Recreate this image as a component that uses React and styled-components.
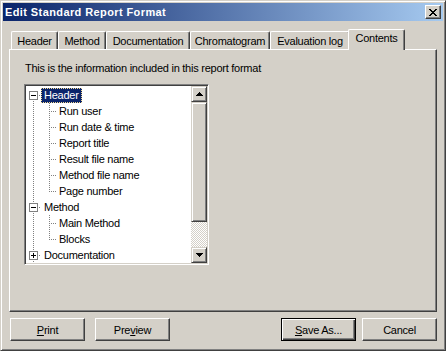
import React from "react";
import styled, { createGlobalStyle, css } from "styled-components";

const FACE = "#D4D0C8";
const SHADOW = "#808080";
const DARK = "#404040";

const Global = createGlobalStyle`
  html, body { margin: 0; padding: 0; background: ${FACE}; }
  body {
    font-family: "Liberation Sans", Arial, sans-serif;
    font-size: 11px;
    letter-spacing: -0.25px;
    color: #000;
  }
  * { box-sizing: border-box; }
`;

const Window = styled.div`
  width: 446px;
  height: 351px;
  background: ${FACE};
  border: 1px solid;
  border-color: ${FACE} ${DARK} ${DARK} ${FACE};
  box-shadow: inset 1px 1px #fff, inset -1px -1px ${SHADOW};
  padding: 2px;
  display: flex;
  flex-direction: column;
`;

const TitleBar = styled.div`
  height: 18px;
  flex: 0 0 18px;
  display: flex;
  align-items: center;
  justify-content: space-between;
  padding: 0 2px 0 2px;
  background: linear-gradient(to right, #0a246a, #a6caf0);
  color: #fff;
  font-weight: bold;
  letter-spacing: 0.4px;
`;

const Title = styled.span`
  white-space: nowrap;
`;

const Bevel = css`
  background: ${FACE};
  border: 1px solid;
  border-color: #fff ${DARK} ${DARK} #fff;
  box-shadow: inset -1px -1px ${SHADOW};
`;

const CloseButton = styled.div`
  ${Bevel}
  width: 16px;
  height: 14px;
  display: flex;
  align-items: center;
  justify-content: center;
  padding-right: 1px;
`;

const Body = styled.div`
  flex: 1;
  display: flex;
  flex-direction: column;
  padding: 8px 6px 0 6px;
`;

const TabStrip = styled.div`
  height: 20px;
  display: flex;
  align-items: flex-end;
  padding-left: 2px;
  position: relative;
  z-index: 1;
`;

const Tab = styled.div`
  width: ${(p) => p.$w}px;
  height: 18px;
  display: flex;
  align-items: center;
  justify-content: center;
  padding-top: 1px;
  background: ${FACE};
  border-left: 1px solid #fff;
  border-top: 1px solid #fff;
  border-right: 1px solid ${DARK};
  border-top-left-radius: 2px;
  border-top-right-radius: 2px;
  box-shadow: inset -1px 0 ${SHADOW};
  white-space: nowrap;
  ${(p) =>
    p.$active &&
    css`
      width: ${p.$w + 4}px;
      height: 21px;
      margin: 0 -2px -1px -2px;
      padding-top: 0;
      padding-bottom: 4px;
      position: relative;
      z-index: 2;
    `}
`;

const Panel = styled.div`
  height: 263px;
  flex: 0 0 263px;
  background: ${FACE};
  border: 1px solid;
  border-color: #fff ${DARK} ${DARK} #fff;
  box-shadow: inset -1px -1px ${SHADOW};
  padding: 10px 0 0 14px;
  display: flex;
  flex-direction: column;
  align-items: flex-start;
`;

const Description = styled.div`
  height: 16px;
  line-height: 16px;
  margin-left: 1px;
  white-space: nowrap;
`;

const TreeBox = styled.div`
  margin-top: 8px;
  width: 185px;
  height: 181px;
  border: 1px solid;
  border-color: ${SHADOW} #fff #fff ${SHADOW};
  box-shadow: inset 1px 1px ${DARK}, inset -1px -1px ${FACE};
  padding: 1px;
  display: flex;
`;

const TreeList = styled.div`
  flex: 1;
  background: #fff;
  overflow: hidden;
  padding-top: 1px;
  display: flex;
  flex-direction: column;
`;

const Row = styled.div`
  height: 16px;
  flex: 0 0 16px;
  display: flex;
  align-items: flex-start;
`;

const Label = styled.span`
  margin-top: 1px;
  height: 15px;
  line-height: 13px;
  padding: 0 2px;
  border: 1px dotted transparent;
  white-space: nowrap;
  ${(p) =>
    p.$selected &&
    css`
      background: #0a246a;
      color: #fff;
      border-color: #f5db95;
    `}
`;

const ScrollBar = styled.div`
  width: 16px;
  flex: 0 0 16px;
  display: flex;
  flex-direction: column;
`;

const ScrollButton = styled.div`
  ${Bevel}
  border-color: ${FACE} ${DARK} ${DARK} ${FACE};
  box-shadow: inset 1px 1px #fff, inset -1px -1px ${SHADOW};
  width: 16px;
  height: ${(p) => p.$h}px;
  flex: 0 0 ${(p) => p.$h}px;
  display: flex;
  align-items: center;
  justify-content: center;
`;

const Track = styled.div`
  flex: 1;
  background: repeating-conic-gradient(${FACE} 0 25%, #fff 0 50%) 0 0 / 2px 2px;
`;

const ButtonRow = styled.div`
  margin-top: 6px;
  display: flex;
  padding-left: 1px;
`;

const Group = styled.div`
  display: flex;
  gap: ${(p) => p.$gap}px;
  margin-left: ${(p) => (p.$right ? "auto" : "0")};
`;

const Button = styled.div`
  width: 75px;
  height: 23px;
  display: flex;
  align-items: center;
  justify-content: center;
  background: ${FACE};
  border: 1px solid;
  border-color: #fff ${DARK} ${DARK} #fff;
  box-shadow: inset -1px -1px ${SHADOW};
  ${(p) =>
    p.$default &&
    css`
      border-color: #000;
      box-shadow: inset 1px 1px #fff, inset -1px -1px ${DARK},
        inset -2px -2px ${SHADOW};
    `}
`;

/* ---------- drawings ---------- */

function CloseGlyph() {
  const rows = [
    [0, 1, 6, 7],
    [1, 2, 5, 6],
    [2, 3, 4, 5],
    [3, 4],
    [2, 3, 4, 5],
    [1, 2, 5, 6],
    [0, 1, 6, 7],
  ];
  return (
    <svg width="8" height="7" shapeRendering="crispEdges">
      {rows.map((r, y) =>
        r.map((x) => <rect key={`${x}-${y}`} x={x} y={y} width="1" height="1" fill="#000" />)
      )}
    </svg>
  );
}

function Arrow({ down }) {
  const rows = down ? [[0, 7], [1, 5], [2, 3], [3, 1]] : [[3, 1], [2, 3], [1, 5], [0, 7]];
  return (
    <svg width="7" height="4" shapeRendering="crispEdges">
      {rows.map(([x, w], y) => (
        <rect key={y} x={x} y={y} width={w} height="1" fill="#000" />
      ))}
    </svg>
  );
}

function dots(x1, y1, x2, y2) {
  const out = [];
  for (let x = x1; x <= x2; x++) {
    for (let y = y1; y <= y2; y++) {
      if ((x + y) % 2 === 1) out.push(<rect key={`${x}_${y}`} x={x} y={y} width="1" height="1" fill={SHADOW} />);
    }
  }
  return out;
}

function Gutter({ level, first, last, expanded, parentLast, childLast }) {
  if (level === 0) {
    return (
      <svg width="15" height="16" shapeRendering="crispEdges" style={{ flex: "0 0 15px" }}>
        {!first && dots(7, 0, 7, 3)}
        {!last && dots(7, 13, 7, 15)}
        {dots(12, 8, 14, 8)}
        <rect x="3.5" y="4.5" width="8" height="8" fill="#fff" stroke={SHADOW} />
        <rect x="5" y="8" width="5" height="1" fill="#000" />
        {!expanded && <rect x="7" y="6" width="1" height="5" fill="#000" />}
      </svg>
    );
  }
  return (
    <svg width="30" height="16" shapeRendering="crispEdges" style={{ flex: "0 0 30px" }}>
      {!parentLast && dots(7, 0, 7, 15)}
      {dots(23, 0, 23, childLast ? 8 : 15)}
      {dots(24, 8, 29, 8)}
    </svg>
  );
}

/* Documentation is followed by further (scrolled-out) entries, hence "more". */
const tree = [
  {
    label: "Header",
    expanded: true,
    selected: true,
    children: ["Run user", "Run date & time", "Report title", "Result file name", "Method file name", "Page number"],
  },
  { label: "Method", expanded: true, children: ["Main Method", "Blocks"] },
  { label: "Documentation", expanded: false, children: [], more: true },
];

function Tree() {
  const rows = [];
  tree.forEach((node, i) => {
    const first = i === 0;
    const last = i === tree.length - 1 && !node.more;
    rows.push(
      <Row key={node.label}>
        <Gutter level={0} first={first} last={last} expanded={node.expanded} />
        <Label $selected={node.selected}>{node.label}</Label>
      </Row>
    );
    if (node.expanded) {
      node.children.forEach((c, j) => {
        rows.push(
          <Row key={node.label + c}>
            <Gutter level={1} parentLast={last} childLast={j === node.children.length - 1} />
            <Label>{c}</Label>
          </Row>
        );
      });
    }
  });
  return <TreeList>{rows}</TreeList>;
}

const tabs = [
  { label: "Header", w: 47 },
  { label: "Method", w: 48 },
  { label: "Documentation", w: 84 },
  { label: "Chromatogram", w: 80 },
  { label: "Evaluation log", w: 80 },
  { label: "Contents", w: 53, active: true },
];

export default function App() {
  return (
    <>
      <Global />
      <Window>
        <TitleBar>
          <Title>Edit Standard Report Format</Title>
          <CloseButton>
            <CloseGlyph />
          </CloseButton>
        </TitleBar>
        <Body>
          <TabStrip>
            {tabs.map((t) => (
              <Tab key={t.label} $w={t.w} $active={t.active}>
                {t.label}
              </Tab>
            ))}
          </TabStrip>
          <Panel>
            <Description>This is the information included in this report format</Description>
            <TreeBox>
              <Tree />
              <ScrollBar>
                <ScrollButton $h={16}>
                  <Arrow />
                </ScrollButton>
                <ScrollButton $h={120} />
                <Track />
                <ScrollButton $h={16}>
                  <Arrow down />
                </ScrollButton>
              </ScrollBar>
            </TreeBox>
          </Panel>
          <ButtonRow>
            <Group $gap={10}>
              <Button>
                <span>
                  <u>P</u>rint
                </span>
              </Button>
              <Button>
                <span>
                  Pre<u>v</u>iew
                </span>
              </Button>
            </Group>
            <Group $gap={6} $right>
              <Button $default>
                <span>
                  <u>S</u>ave As...
                </span>
              </Button>
              <Button>
                <span>Cancel</span>
              </Button>
            </Group>
          </ButtonRow>
        </Body>
      </Window>
    </>
  );
}
